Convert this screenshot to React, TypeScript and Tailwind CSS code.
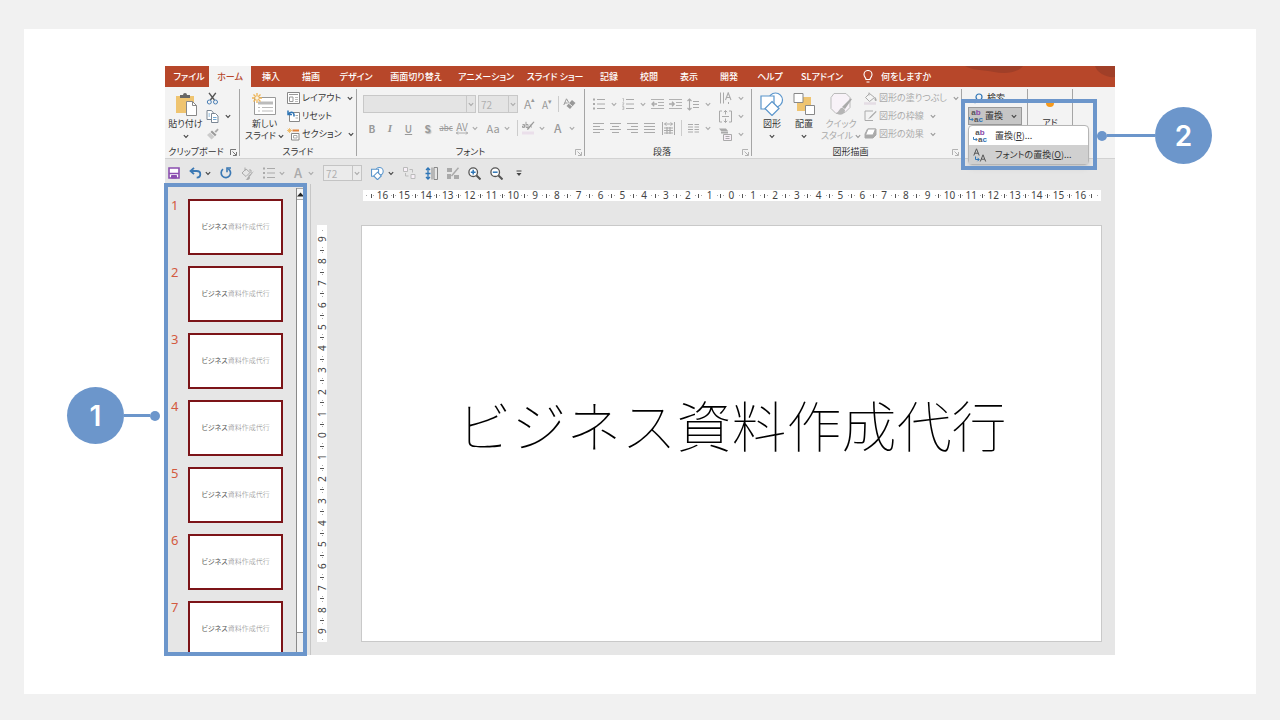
import React from 'react'

type IconProps = { w: number; h: number; className?: string; children: React.ReactNode }

const Icon: React.FC<IconProps> = ({ w, h, className = '', children }) => (
  <svg width={w} height={h} viewBox={`0 0 ${w} ${h}`} fill="none" stroke="currentColor" aria-hidden="true" className={`shrink-0 ${className}`}>
    {children}
  </svg>
)

const Chevron: React.FC<{ className?: string }> = ({ className = 'text-[#444]' }) => (
  <Icon w={6} h={5} className={className}>
    <path d="M.8 1.2 3 3.4 5.2 1.2" strokeWidth="1.1" />
  </Icon>
)

const Launcher: React.FC<{ label: string; className?: string }> = ({ label, className = 'text-[#777]' }) => (
  <button type="button" aria-label={label} className={`absolute right-0.5 bottom-0 ${className}`}>
    <Icon w={7} h={7}>
      <path d="M.5 6V.5H6M2.5 2.5l3.5 3.5M6.5 3v3.5H3" strokeWidth=".9" />
    </Icon>
  </button>
)

const PasteIcon = () => (
  <Icon w={24} h={24}>
    <path d="M2 4h18v17H2z" fill="#efc470" stroke="none" />
    <path d="M6 6V3h3a2 2 0 0 1 4 0h3v3z" fill="#666" stroke="none" />
    <path d="M12.5 9.5h6l4 4v10h-10z" fill="#fff" stroke="#888" />
    <path d="M18.5 9.5v4h4" stroke="#888" />
  </Icon>
)

const CutIcon = () => (
  <Icon w={13} h={13}>
    <path d="M3 .8 8.4 8M9.8.8 4.4 8" stroke="#555" strokeWidth="1.4" />
    <circle cx="3.3" cy="10" r="2" stroke="#4a7fb5" />
    <circle cx="9.5" cy="10" r="2" stroke="#4a7fb5" />
  </Icon>
)

const CopyIcon = () => (
  <Icon w={13} h={13}>
    <path d="M1 .5h4.5L7.5 3v6.5H1z" fill="#fff" stroke="#7b8794" />
    <path d="M5.5 3.5h4L12 6v6.5H5.5z" fill="#fff" stroke="#7b8794" />
    <path d="M7 7.5h3.5M7 9.5h3.5M2.5 4H4M2.5 6H4" stroke="#4a90c8" strokeWidth=".8" />
  </Icon>
)

const BrushIcon = () => (
  <Icon w={13} h={12}>
    <path d="m8.500 3.500 3-3 1.200 1.200-2.700 3z" fill="#aaa" stroke="none" />
    <path d="m6 2.500 4.500 4.200-1.500 1.500L4.500 4z" fill="#999" stroke="none" />
    <path d="M4 4.500 8.500 8.700 5.500 11.500 1 7z" fill="#ccc" stroke="none" />
  </Icon>
)

const NewSlideIcon = () => (
  <Icon w={25} h={23}>
    <path d="M2.5 4.500h21v17h-21z" fill="#fff" stroke="#999" />
    <path d="M6 8.500h15v3H6z" fill="#bbb" stroke="none" />
    <path d="M6 14.500h2M10 14.500h11M6 18h2M10 18h11" stroke="#bbb" />
    <path d="M5 0v10M0 5h10M1.500 1.500l7 7M8.500 1.500l-7 7" stroke="#efb455" strokeWidth="1.3" />
    <circle cx="5" cy="5" r="1.8" fill="#f7f3e8" stroke="none" />
  </Icon>
)

const LayoutIcon = () => (
  <Icon w={13} h={12}>
    <path d="M.5.5h12v11H.5z" fill="#fff" stroke="#888" />
    <path d="M2 2.500h9M2.500 5H6v4.500H2.500z" stroke="#999" />
    <path d="M8 5.500h3M8 7.500h3M8 9.500h3" stroke="#aaa" strokeWidth=".8" />
  </Icon>
)

const ResetIcon = () => (
  <Icon w={13} h={12}>
    <path d="M2.500 2.500h10v9h-10z" fill="#fff" stroke="#888" />
    <path d="M8.500 5.500H11M8.500 8H11" stroke="#aaa" />
    <path d="M1 .5v4h4M1.500 4.200C4 .8 7.500 2 7 6.500" stroke="#2e75b6" strokeWidth="1.5" />
  </Icon>
)

const SectionIcon = () => (
  <Icon w={13} h={13}>
    <path d="M2.500 0v5M0 2.500h5M.8.8l3.400 3.400M4.200.8.8 4.200" stroke="#efb455" strokeWidth=".8" />
    <path d="M5.500 2.500H12" stroke="#e2823a" strokeWidth="2" />
    <path d="M4.500 5.500H12V12H4.500z" fill="#fff" stroke="#888" />
    <path d="M6.500 7.500H10V10H6.500z" stroke="#aaa" />
  </Icon>
)

const BulletsIcon = () => (
  <Icon w={12} h={12}>
    <path d="M0 1.500h2M0 6h2M0 10.500h2" strokeWidth="2" />
    <path d="M4 1.500h8M4 6h8M4 10.500h8" />
  </Icon>
)

const NumbersIcon = () => (
  <Icon w={12} h={12}>
    <path d="M.5.5h1v3M.3 4.800h1.500v1L.5 7H2M.3 8.500h1.500v3H.3M.5 10h1.300" strokeWidth=".7" />
    <path d="M4 1.500h8M4 6h8M4 10.500h8" />
  </Icon>
)

const IndentIcon: React.FC<{ out?: boolean }> = ({ out }) => (
  <Icon w={13} h={12}>
    <path d="M0 1.500h13M7 4.500h6M7 7.500h6M0 10.500h13" strokeWidth=".9" />
    {out ? <path d="M6 6H1M3.200 3.800 1 6l2.200 2.200" strokeWidth="1.3" /> : <path d="M0 6h5M3 3.800 5.200 6 3 8.200" strokeWidth="1.3" />}
  </Icon>
)

const SpacingIcon = () => (
  <Icon w={12} h={13}>
    <path d="M2.500 1v11M.5 3l2-2 2 2M.5 10l2 2 2-2" strokeWidth="1.1" />
    <path d="M6 3.500h6M6 6.500h6M6 9.500h6" />
  </Icon>
)

const LeftIcon = () => (
  <Icon w={11} h={10}><path d="M0 .5h11M0 3.500h7M0 6.500h11M0 9.500h7" /></Icon>
)
const CenterIcon = () => (
  <Icon w={11} h={10}><path d="M0 .5h11M2 3.500h7M0 6.500h11M2 9.500h7" /></Icon>
)
const RightIcon = () => (
  <Icon w={11} h={10}><path d="M0 .5h11M4 3.500h7M0 6.500h11M4 9.500h7" /></Icon>
)
const JustifyIcon = () => (
  <Icon w={11} h={10}><path d="M0 .5h11M0 3.500h11M0 6.500h11M0 9.500h11" /></Icon>
)
const DistributeIcon = () => (
  <Icon w={13} h={13}>
    <path d="M.5 0v13M12.500 0v13M2.500 2h8M4.500.5 2.500 2l2 1.500M8.500.5l2 1.500-2 1.500" />
    <path d="M2 6h9M2 8.500h9M2 11h9M5 5v7M8 5v7" strokeWidth="1.2" />
  </Icon>
)
const ColumnsIcon = () => (
  <Icon w={11} h={10}><path d="M0 1.500h5M0 4h5M0 6.500h5M0 9h5M6.500 1.500H11M6.500 4H11M6.500 6.500H11M6.500 9H11" /></Icon>
)

const TextDirectionIcon = () => (
  <Icon w={13} h={13}>
    <path d="M1.500.5v11M4.500.5v11M9.500 10v2" />
    <path d="M6.500 8 9.200.8 12 8M7.500 5.500H11" strokeWidth="1.1" />
  </Icon>
)
const AlignTextIcon = () => (
  <Icon w={13} h={13}>
    <path d="M3 1H.5v11H3M10 1h2.500v11H10M6.500.5v4M4.800 2.200 6.500.5l1.700 1.700M6.500 8.500v4M4.800 10.800l1.700 1.700 1.700-1.700M3 6.500h7" />
  </Icon>
)
const SmartArtIcon = () => (
  <Icon w={13} h={13}>
    <path d="M0 .5h7L9 3H2zM2 3.500h7v2H2z" fill="currentColor" stroke="none" />
    <path d="M4.500 6.500h8v6h-8z" fill="#f6eef6" />
    <path d="M6.500 8.500h4M6.500 10.500h4" />
  </Icon>
)

const ShapesIcon: React.FC<{ size?: number }> = ({ size = 24 }) => (
  <svg width={size} height={size} viewBox="0 0 24 24" fill="#fff" stroke="#5b96cc" strokeWidth={size > 16 ? 1.2 : 2} aria-hidden="true" className="shrink-0">
    <circle cx="15.500" cy="8" r="7" />
    <path d="M1 4h13v13H1z" />
    <path d="m12 9.500 7 7-7 7-7-7z" />
  </svg>
)

const ArrangeIcon = () => (
  <Icon w={23} h={24}>
    <path d="M4 5h14v14H4z" fill="#efc470" stroke="none" />
    <path d="M1 1.500h9v9H1zM12.500 13.500h9v9h-9z" fill="#fff" stroke="#888" />
  </Icon>
)

const QuickStyleIcon = () => (
  <Icon w={24} h={24} className="text-[#bbb]">
    <path d="M5 1.500h12l4 4v10l-5 5-9 1-5-5v-11z" fill="#f8f2f8" strokeLinejoin="round" />
    <path d="m23 7-7 10-3-2 8.500-8.500z" fill="#aaa" stroke="none" />
    <path d="M14 16c-4-1-3 4-7 5 3 3 9 2 9-3z" fill="#b5b5b5" stroke="none" />
  </Icon>
)

const FillIcon = () => (
  <Icon w={13} h={13} className="text-[#aaa]">
    <path d="m5.500 1.500 5 4-5 4-4-4zM5 .5v3" fill="#f5f5f5" />
    <path d="M11 5c2 2 2 4 .8 4S10 7 11 5z" fill="#aaa" stroke="none" />
    <path d="M0 11.500h12" stroke="#e4dde4" strokeWidth="2.5" />
  </Icon>
)
const OutlineIcon = () => (
  <Icon w={13} h={12} className="text-[#aaa]">
    <path d="M9 1H1v9.500h8" />
    <path d="m12 .8-6 6-2 2.500 2.800-1.500L12.500 2z" fill="#aaa" stroke="none" />
  </Icon>
)
const EffectIcon = () => (
  <Icon w={13} h={12} className="text-[#aaa]">
    <path d="M3.500 1H12v6l-3 3H1V6z" fill="#aaa" />
    <path d="M4 1h7.500L9 7H1.500z" fill="#fff" />
  </Icon>
)

const ReplaceIcon = () => (
  <span className="flex w-[14px] shrink-0 flex-col font-['Liberation_Sans'] text-[8px] leading-[7px] font-bold text-[#555]" aria-hidden="true">
    <span>a<span className="text-[#8a48a8]">b</span></span>
    <span className="flex items-center">
      <Icon w={5} h={5} className="text-[#2e75b6]"><path d="M.5 0v2.500H4M2.700 1 4.200 2.500 2.700 4" strokeWidth=".9" /></Icon>
      a<span className="text-[#2e75b6]">c</span>
    </span>
  </span>
)

const ReplaceFontIcon = () => (
  <Icon w={14} h={14} className="text-[#555]">
    <path d="M.8 7.500 3.500.8l2.700 6.700M1.800 5.200h3.400M7.300 13.500 10 6.800l2.700 6.700M8.300 11.200h3.400" />
    <path d="M2.500 8.500v3H6M4.500 9.800 6.200 11.500 4.500 13.200" stroke="#2e75b6" />
  </Icon>
)

const EraserIcon = () => (
  <Icon w={13} h={13}>
    <path d="M.8 7 3.500.8l2.400 4M1.800 5h2.800" />
    <path d="m9 2 3.500 3-5.500 6-3.500-3z" fill="currentColor" stroke="none" />
    <path d="m6 5.500 3.500 3" stroke="#f3f3f3" />
  </Icon>
)

const SaveIcon = () => (
  <Icon w={12} h={12} className="text-[#8b4fb0]">
    <path d="M1 1h10v10H1z" fill="#fff" strokeWidth="1.6" />
    <path d="M1 6.500h10" strokeWidth="1.5" />
    <path d="M3.500 8.500h5V11h-5z" fill="currentColor" />
  </Icon>
)
const UndoIcon = () => (
  <Icon w={13} h={12} className="text-[#3c79b4]">
    <path d="M5 .8 1.500 4 5 7.200M1.500 4h6.200c4.800 0 4.800 6.500 0 6.700" strokeWidth="1.8" />
  </Icon>
)
const RedoIcon = () => (
  <Icon w={12} h={12} className="text-[#3c79b4]">
    <path d="M3 2.200a4.700 4.700 0 1 0 5.300-.3" strokeWidth="1.7" />
    <path d="M11 1H7v4.200" strokeWidth="1.6" />
  </Icon>
)
const PaintPenIcon = () => (
  <Icon w={13} h={13}>
    <path d="m5 2 4 3.500-4 4L1 6zM4 .5V4M8 3h2v3" />
    <path d="m13 4-4.500 6-1.500-1zM8 9.500c-2 0-1 2.500-3.500 3 2.500 1 4.500 0 4.500-2z" fill="currentColor" stroke="none" />
  </Icon>
)
const GroupIcon = () => (
  <Icon w={13} h={12} className="text-[#bbb]">
    <path d="M.5.5h4v4h-4zM8 7.500h4v4H8z" fill="#f8f0f8" />
    <path d="M6.500 2.500h3v3M2.500 6v3h3" />
  </Icon>
)
const DistributeVIcon = () => (
  <Icon w={13} h={13}>
    <path d="M3 1v11M1 3l2-2 2 2M1 10l2 2 2-2M.5 6.500h5" stroke="#2e75b6" strokeWidth="1.3" />
    <path d="M7 .5v12M9 .5h3.500v12H9z" stroke="#888" />
  </Icon>
)
const EditTilesIcon = () => (
  <Icon w={12} h={12}>
    <path d="M0 1h5v4H0zM0 7h4v5H0zM7 8h5v4H7z" fill="currentColor" stroke="none" />
    <path d="m11.500.8-7 8.200" strokeWidth="1.5" />
  </Icon>
)
const MagnifierIcon: React.FC<{ plus?: boolean }> = ({ plus }) => (
  <Icon w={13} h={13} className="text-[#555]">
    <circle cx="5.200" cy="5.200" r="4.300" fill="#fff" strokeWidth="1.3" />
    <path d="m8.500 8.500 4 4" strokeWidth="2" />
    <path d={plus ? 'M2.800 5.200h4.800M5.200 2.800v4.800' : 'M2.800 5.200h4.800'} stroke="#2e75b6" strokeWidth="1.5" />
  </Icon>
)

const tabs = [
  { name: 'ファイル', width: 'w-[40px]' },
  { name: 'ホーム', width: 'w-[42px]', active: true },
  { name: '挿入', width: 'w-10' },
  { name: '描画', width: 'w-10' },
  { name: 'デザイン', width: 'w-[50px]' },
  { name: '画面切り替え', width: 'w-[70px]' },
  { name: 'アニメーション', width: 'w-[70px]' },
  { name: 'スライド ショー', width: 'w-[68px]' },
  { name: '記録', width: 'w-10' },
  { name: '校閲', width: 'w-10' },
  { name: '表示', width: 'w-10' },
  { name: '開発', width: 'w-10' },
  { name: 'ヘルプ', width: 'w-[42px]' },
  { name: 'SLアドイン', width: 'w-[62px]' }
]

const Tabs = () => (
  <nav className="relative flex h-[21px] items-stretch bg-[#b7472a] pl-1 font-medium text-white">
    <svg viewBox="0 0 180 21" className="absolute top-0 right-0 h-full w-[180px]" aria-hidden="true">
      <path d="M30 0h58c-5 7-18 8-29 6S36 4 30 0zM160 0h20v11c-8 1-18-4-20-11z" fill="#a03f28" />
    </svg>
    {tabs.map((tab) => (
      <button
        key={tab.name}
        type="button"
        className={`shrink-0 whitespace-nowrap ${tab.width} ${tab.active ? 'bg-[#f3f3f3] text-[#b7472a]' : ''}`}
      >
        {tab.name}
      </button>
    ))}
    <button type="button" className="relative ml-2.5 flex items-center gap-2 whitespace-nowrap">
      <Icon w={10} h={13}>
        <path d="M3 9.500C3 7.500 1 7 1 4.500a4 4 0 0 1 8 0C9 7 7 7.500 7 9.500zM3.500 12h3" strokeWidth="1.1" />
      </Icon>
      何をしますか
    </button>
  </nav>
)

const Group: React.FC<{ label: string; className: string; launcher?: string; children: React.ReactNode }> = ({ label, className, launcher, children }) => (
  <section aria-label={label} className={`relative flex shrink-0 flex-col justify-between border-r border-[#a5a5a5] ${className}`}>
    <div className="flex h-[54px]">{children}</div>
    {label && <div className="text-center leading-none whitespace-nowrap">{label}</div>}
    {launcher && <Launcher label={`${label}の詳細`} className={launcher} />}
  </section>
)

const SmallButton: React.FC<{ icon: React.ReactNode; label?: string; aria?: string; arrow?: boolean; arrowClass?: string }> = ({ icon, label, aria, arrow, arrowClass }) => (
  <button type="button" aria-label={aria} className="flex h-[18px] items-center gap-0.5 whitespace-nowrap">
    {icon}
    {label}
    {arrow && <span className="pl-1"><Chevron className={arrowClass} /></span>}
  </button>
)

const BigButton: React.FC<{ icon: React.ReactNode; label: string; className: string }> = ({ icon, label, className }) => (
  <button type="button" className={`flex flex-col items-center pt-[3px] leading-3 whitespace-nowrap ${className}`}>
    {icon}
    <span className="pt-0.5">{label}</span>
    <span className="flex h-3 items-center"><Chevron /></span>
  </button>
)

const FontGroup = () => (
  <Group label="フォント" className="w-[228px] text-[#333]" launcher="text-[#aaa]">
    <div className="flex flex-col pl-1.5 text-[#999]">
      <div className="flex h-[30px] items-center gap-0.5">
        <div className="relative">
          <input aria-label="フォント名" disabled className="block h-[18px] w-[113px] border border-[#c8c8c8] bg-[#e4e4e4]" />
          <span className="absolute top-0 right-0 flex h-[18px] w-2.5 items-center justify-center border border-[#c8c8c8]"><Chevron className="text-[#aaa]" /></span>
        </div>
        <div className="relative">
          <input aria-label="フォント サイズ" disabled defaultValue="72" className="block h-[18px] w-10 border border-[#c8c8c8] bg-[#e4e4e4] pl-0.5 text-[10px] text-[#b0b0b0]" />
          <span className="absolute top-0 right-0 flex h-[18px] w-2.5 items-center justify-center border border-[#c8c8c8]"><Chevron className="text-[#aaa]" /></span>
        </div>
        <button type="button" aria-label="拡大" className="ml-1 flex w-3 text-[12px]">A<span className="text-[7px] leading-2">▴</span></button>
        <button type="button" aria-label="縮小" className="ml-1 flex w-3 text-[10px]">A<span className="text-[7px] leading-2">▾</span></button>
        <span className="mx-0.5 h-4 w-px bg-[#ccc]" />
        <button type="button" aria-label="書式のクリア"><EraserIcon /></button>
      </div>
      <div className="flex h-[18px] items-center text-[10px]">
        <button type="button" className="w-[18px] text-center font-bold">B</button>
        <button type="button" className="w-[18px] text-center font-['Liberation_Serif'] text-[11px] font-bold italic">I</button>
        <button type="button" className="w-[19px] text-center font-medium underline">U</button>
        <button type="button" className="w-[19px] text-center font-bold [text-shadow:1px_1px_1px_#bbb]">S</button>
        <button type="button" className="w-[18px] text-center text-[8px] line-through">abc</button>
        <button type="button" aria-label="文字の間隔" className="flex w-6 items-center justify-center gap-1">
          <span className="flex flex-col text-[10px] leading-[9px]">
            AV
            <Icon w={12} h={4}><path d="M0 2h12M2 .5.5 2 2 3.500M10 .5 11.500 2 10 3.500" strokeWidth=".8" /></Icon>
          </span>
          <Chevron className="text-[#aaa]" />
        </button>
        <button type="button" className="ml-1 flex w-[30px] items-center justify-center gap-1 text-[11px]">Aa <Chevron className="text-[#aaa]" /></button>
        <span className="mx-1 h-4 w-px bg-[#ccc]" />
        <button type="button" aria-label="蛍光ペン" className="flex w-6 items-center gap-1">
          <Icon w={13} h={14}>
            <path d="M.5 3.500h2v3h-2V5h2M4 .8v5.700h2v-3H4M8 3.500l1.500 3" strokeWidth=".9" />
            <path d="m12.500 1-6 7.500-1.500.5.500-2L11.500.5z" fill="currentColor" stroke="none" />
            <path d="M0 12h12" stroke="#eadfea" strokeWidth="3" />
          </Icon>
          <Chevron className="text-[#aaa]" />
        </button>
        <button type="button" className="ml-2 flex items-center gap-2 text-[12px] font-medium">A <Chevron className="text-[#aaa]" /></button>
      </div>
    </div>
  </Group>
)

const ParagraphGroup = () => (
  <Group label="段落" className="w-[167px] pr-3" launcher="text-[#aaa]">
    <div className="flex pl-2 text-[#aaa]">
      <div className="w-[118px]">
        <div className="flex h-[30px] items-center justify-between">
          <SmallButton icon={<BulletsIcon />} aria="箇条書き" arrow arrowClass="text-[#aaa]" />
          <SmallButton icon={<NumbersIcon />} aria="段落番号" arrow arrowClass="text-[#aaa]" />
          <SmallButton icon={<IndentIcon out />} aria="インデントを減らす" />
          <SmallButton icon={<IndentIcon />} aria="インデントを増やす" />
          <SmallButton icon={<SpacingIcon />} aria="行間" arrow arrowClass="text-[#aaa]" />
        </div>
        <div className="flex h-[18px] items-center justify-between">
          <SmallButton icon={<LeftIcon />} aria="左揃え" />
          <SmallButton icon={<CenterIcon />} aria="中央揃え" />
          <SmallButton icon={<RightIcon />} aria="右揃え" />
          <SmallButton icon={<JustifyIcon />} aria="両端揃え" />
          <SmallButton icon={<DistributeIcon />} aria="均等割り付け" />
          <span className="h-4 w-px bg-[#ccc]" />
          <SmallButton icon={<ColumnsIcon />} aria="段組み" arrow arrowClass="text-[#aaa]" />
        </div>
      </div>
      <div className="ml-2">
        <SmallButton icon={<TextDirectionIcon />} aria="文字列の方向" arrow arrowClass="text-[#aaa]" />
        <SmallButton icon={<AlignTextIcon />} aria="文字の配置" arrow arrowClass="text-[#aaa]" />
        <SmallButton icon={<SmartArtIcon />} aria="SmartArt に変換" arrow arrowClass="text-[#aaa]" />
      </div>
    </div>
  </Group>
)

const Badge: React.FC<{ children: React.ReactNode }> = ({ children }) => (
  <span className="flex size-[57px] items-center justify-center rounded-full bg-[#6c96cb] font-[Inter] text-[28px] leading-none font-semibold text-white">
    {children}
  </span>
)

const EditGroup = () => (
  <Group label="" className="w-[66px]">
    <div className="flex flex-col pl-1.5">
      <button type="button" className="flex h-[18px] items-center gap-1 pl-1.5">
        <Icon w={9} h={11} className="text-[#2e75b6]"><circle cx="5" cy="4" r="3" strokeWidth="1.2" /><path d="M3 6.500.5 10" strokeWidth="1.5" /></Icon>
        検索
      </button>
      <button type="button" aria-expanded="true" className="flex h-[18px] w-[54px] items-center gap-0.5 border border-[#999] bg-[#c6c6c6] whitespace-nowrap">
        <ReplaceIcon />
        置換
        <span className="ml-auto pr-1"><Chevron /></span>
      </button>
    </div>
    <div role="menu" className="absolute top-9 left-1.5 z-10 w-[121px] rounded-sm border border-[#b5b5b5] bg-white shadow-md">
      <button type="button" role="menuitem" className="flex h-[19px] w-full items-center gap-2 pl-1 whitespace-nowrap">
        <ReplaceIcon />
        <span>置換(<u>R</u>)...</span>
      </button>
      <button type="button" role="menuitem" className="flex h-[19px] w-full items-center gap-2 bg-[#d0d0d0] pl-1 whitespace-nowrap">
        <ReplaceFontIcon />
        <span>フォントの置換(<u>O</u>)...</span>
      </button>
    </div>
    <div className="pointer-events-none absolute top-[10px] -left-px z-20 h-[71px] w-[136px] border-4 border-[#6c96cb]">
      <div className="absolute top-1 left-full flex items-center">
        <span className="ml-1 size-[10px] rounded-full bg-[#6c96cb]" />
        <span className="h-[3px] w-12 bg-[#6c96cb]" />
        <Badge>2</Badge>
      </div>
    </div>
  </Group>
)

const Ribbon = () => (
  <div className="flex h-[71px] items-stretch bg-[#f3f3f3] py-0.5">
    <Group label="クリップボード" className="w-[75px] pr-3" launcher="text-[#666]">
      <BigButton icon={<PasteIcon />} label="貼り付け" className="w-[41px] shrink-0" />
      <div>
        <SmallButton icon={<CutIcon />} aria="切り取り" />
        <SmallButton icon={<CopyIcon />} aria="コピー" arrow />
        <SmallButton icon={<BrushIcon />} aria="書式のコピー" />
      </div>
    </Group>
    <Group label="スライド" className="w-[117px]">
      <button type="button" className="ml-0.5 flex w-[45px] shrink-0 flex-col items-center pt-1 leading-3 whitespace-nowrap">
        <NewSlideIcon />
        <span className="pt-0.5">新しい</span>
        <span className="flex items-center gap-0.5">スライド <Chevron /></span>
      </button>
      <div>
        <SmallButton icon={<LayoutIcon />} label="レイアウト" arrow />
        <SmallButton icon={<ResetIcon />} label="リセット" />
        <SmallButton icon={<SectionIcon />} label="セクション" arrow />
      </div>
    </Group>
    <FontGroup />
    <ParagraphGroup />
    <Group label="図形描画" className="w-[210px] pr-3" launcher="text-[#aaa]">
      <BigButton icon={<ShapesIcon />} label="図形" className="ml-1 w-8 shrink-0" />
      <BigButton icon={<ArrangeIcon />} label="配置" className="w-8 shrink-0" />
      <button type="button" className="flex w-[42px] shrink-0 flex-col items-center pt-[3px] leading-3 whitespace-nowrap text-[#aaa]">
        <QuickStyleIcon />
        <span className="pt-0.5">クイック</span>
        <span className="flex items-center gap-0.5">スタイル <Chevron className="text-[#999]" /></span>
      </button>
      <div className="pl-0.5 text-[#aaa]">
        <SmallButton icon={<FillIcon />} label="図形の塗りつぶし" arrow arrowClass="text-[#999]" />
        <SmallButton icon={<OutlineIcon />} label="図形の枠線" arrow arrowClass="text-[#999]" />
        <SmallButton icon={<EffectIcon />} label="図形の効果" arrow arrowClass="text-[#999]" />
      </div>
    </Group>
    <EditGroup />
    <Group label="" className="w-[45px]">
      <button type="button" className="flex w-full flex-col items-center pt-2.5 leading-3">
        <span className="mb-2.5 size-2 rounded-full bg-[#f79a1c]" />
        アド
      </button>
    </Group>
  </div>
)

const QuickAccess = () => (
  <div className="flex h-[26px] items-center gap-[9px] border-t border-[#d2d2d2] pt-[3px] pl-[3px] text-[#aaa]">
    <button type="button" aria-label="上書き保存"><SaveIcon /></button>
    <button type="button" aria-label="元に戻す" className="flex items-center gap-[3px]"><UndoIcon /><Chevron /></button>
    <button type="button" aria-label="やり直し"><RedoIcon /></button>
    <button type="button" aria-label="塗りつぶし"><PaintPenIcon /></button>
    <button type="button" aria-label="箇条書き" className="flex items-center gap-1"><BulletsIcon /><Chevron className="text-[#aaa]" /></button>
    <button type="button" className="flex items-center gap-1.5 text-[13px] font-medium">A <Chevron className="text-[#aaa]" /></button>
    <div className="relative">
      <input aria-label="サイズ" disabled defaultValue="72" className="block h-4 w-[39px] border border-[#c4c4c4] bg-[#ebebeb] pl-0.5 text-[10px] text-[#b0b0b0]" />
      <span className="absolute top-0 right-0 flex h-4 w-2.5 items-center justify-center border border-[#c4c4c4]"><Chevron className="text-[#aaa]" /></span>
    </div>
    <button type="button" aria-label="図形" className="flex items-center gap-1"><ShapesIcon size={13} /><Chevron /></button>
    <button type="button" aria-label="グループ化"><GroupIcon /></button>
    <button type="button" aria-label="上下に整列"><DistributeVIcon /></button>
    <button type="button" aria-label="編集"><EditTilesIcon /></button>
    <button type="button" aria-label="拡大"><MagnifierIcon plus /></button>
    <button type="button" aria-label="縮小"><MagnifierIcon /></button>
    <button type="button" aria-label="クイック アクセス ツール バーのユーザー設定" className="ml-1 text-[#444]">
      <Icon w={6} h={7}><path d="M.5 1h5" /><path d="M.5 3h5L3 6z" fill="currentColor" stroke="none" /></Icon>
    </button>
  </div>
)

const slides = [1, 2, 3, 4, 5, 6, 7]

const Thumbnails = () => (
  <aside className="relative w-[141px] shrink-0">
    <div className="flex h-full overflow-hidden contain-size">
      <ol className="flex flex-1 flex-col gap-[11px] pt-[15px] pl-1.5">
        {slides.map((n) => (
          <li key={n} className="flex shrink-0 gap-[9px]">
            <span className="w-2 font-['Noto_Sans'] text-[13px] leading-3 text-[#d35a3f]">{n}</span>
            <div className="flex h-14 w-[95px] items-center justify-center border-2 border-[#7c1418] bg-white pb-0.5 text-[7px] whitespace-nowrap text-[#555]">
              ビジネス<span className="font-light text-[#888]">資料作成代行</span>
            </div>
          </li>
        ))}
      </ol>
      <div className="mt-1 mb-0.5 flex w-[10px] flex-col border-l border-[#8a8a8a] bg-[#f0f0f0]">
        <button type="button" aria-label="上へ" className="flex h-3 shrink-0 items-center border-y border-[#aaa] bg-[#f5f5f5] text-[#222]">
          <Icon w={8} h={5}><path d="M0 4.500 3.500.5 7 4.500z" fill="currentColor" stroke="none" /></Icon>
        </button>
        <div className="mb-5 flex-1 border-b border-[#8a8a8a] bg-white" />
      </div>
    </div>
    <div className="pointer-events-none absolute -inset-px z-10 border-4 border-[#6c96cb]">
      <div className="absolute top-[200px] right-full flex items-center">
        <Badge>1</Badge>
        <span className="h-[3px] w-[26px] bg-[#6c96cb]" />
        <span className="mr-2 size-[10px] rounded-full bg-[#6c96cb]" />
      </div>
    </div>
  </aside>
)

const scale = (max: number) => Array.from({ length: max * 2 + 1 }, (_, i) => Math.abs(i - max))

const Dot = () => <span className="size-px shrink-0 bg-[#aaa]" />

const HorizontalRuler = () => (
  <div className="col-start-2 mr-px ml-0.5 flex h-[11px] items-center bg-white px-[3px] font-['Noto_Sans'] text-[10px] leading-[11px] text-[#444]">
    <span className="flex w-1.5 items-center justify-between"><Dot /><span className="h-1 w-px bg-[#555]" /></span>
    {scale(16).map((n, i) => (
      <React.Fragment key={i}>
        <span className="flex min-w-0 flex-1 basis-0 items-center justify-around"><Dot />{n}<Dot /></span>
        <span className="h-1 w-px shrink-0 bg-[#555]" />
      </React.Fragment>
    ))}
    <span className="flex w-1.5 justify-end"><Dot /></span>
  </div>
)

const VerticalRuler = () => (
  <div className="flex flex-col items-center bg-white pt-1 font-['Noto_Sans'] text-[10px] leading-none text-[#444]">
    {scale(9).map((n, i) => (
      <React.Fragment key={i}>
        {i > 0 && <span className="h-px w-1 shrink-0 bg-[#555]" />}
        <span className="flex min-h-0 flex-1 basis-0 flex-col items-center justify-around">
          <Dot />
          <span className="flex size-2.5 -rotate-90 items-center justify-center">{n}</span>
          <Dot />
        </span>
      </React.Fragment>
    ))}
  </div>
)

const Editor = () => (
  <main className="grid flex-1 grid-cols-[10px_1fr] gap-x-[34px] gap-y-6 border-l border-[#c6c6c6] pt-1.5 pr-[13px] pb-[13px] pl-[6px]">
    <HorizontalRuler />
    <VerticalRuler />
    <div className="flex aspect-video items-center justify-center border border-[#c9c9c9] bg-white pb-5">
      <h1 className="text-[55px] leading-none font-thin whitespace-nowrap text-black [font-feature-settings:normal]">ビジネス資料作成代行</h1>
    </div>
  </main>
)

const App: React.FC = () => {
  return (
    <div lang="ja" className="flex min-h-screen bg-[#f1f1f1] px-6 pt-[29px] pb-[26px] font-['Noto_Sans_CJK_JP',sans-serif]">
      <div className="flex-1 bg-white px-[141px] pt-[37px] pb-[39px]">
        <div className="bg-[#e6e6e6] text-[9px] text-[#333] [font-feature-settings:'palt']">
          <Tabs />
          <Ribbon />
          <QuickAccess />
          <div className="flex gap-1">
            <Thumbnails />
            <Editor />
          </div>
        </div>
      </div>
    </div>
  )
}

export default App
